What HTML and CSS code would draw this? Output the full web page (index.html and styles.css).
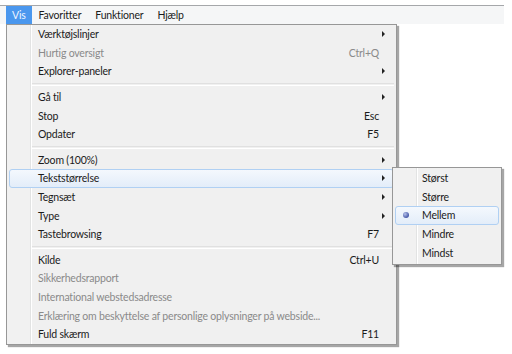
FILE: index.html
```html
<!DOCTYPE html>
<html lang="da">
<head>
    <meta charset="UTF-8">
    <title>Vis</title>
    <link rel="stylesheet" href="styles.css">
</head>
<body>
    <div class="menubar">
        <span class="top-item active">Vis</span>
        <span class="top-item">Favoritter</span>
        <span class="top-item">Funktioner</span>
        <span class="top-item">Hjælp</span>
    </div>

    <div class="menu main-menu">
        <div class="item"><span class="label">Værktøjslinjer</span><span class="arrow"></span></div>
        <div class="item disabled"><span class="label">Hurtig oversigt</span><span class="key">Ctrl+Q</span></div>
        <div class="item"><span class="label">Explorer-paneler</span><span class="arrow"></span></div>
        <div class="sep"></div>
        <div class="item"><span class="label">Gå til</span><span class="arrow"></span></div>
        <div class="item"><span class="label">Stop</span><span class="key">Esc</span></div>
        <div class="item"><span class="label">Opdater</span><span class="key">F5</span></div>
        <div class="sep"></div>
        <div class="item"><span class="label">Zoom (100%)</span><span class="arrow"></span></div>
        <div class="item hover"><span class="label">Tekststørrelse</span><span class="arrow"></span></div>
        <div class="item"><span class="label">Tegnsæt</span><span class="arrow"></span></div>
        <div class="item"><span class="label">Type</span><span class="arrow"></span></div>
        <div class="item"><span class="label">Tastebrowsing</span><span class="key">F7</span></div>
        <div class="sep"></div>
        <div class="item"><span class="label">Kilde</span><span class="key">Ctrl+U</span></div>
        <div class="item disabled"><span class="label">Sikkerhedsrapport</span></div>
        <div class="item disabled"><span class="label">International webstedsadresse</span></div>
        <div class="item disabled"><span class="label">Erklæring om beskyttelse af personlige oplysninger på webside...</span></div>
        <div class="item"><span class="label">Fuld skærm</span><span class="key">F11</span></div>
    </div>

    <div class="menu sub-menu">
        <div class="item"><span class="label">Størst</span></div>
        <div class="item"><span class="label">Større</span></div>
        <div class="item hover"><span class="radio"></span><span class="label">Mellem</span></div>
        <div class="item"><span class="label">Mindre</span></div>
        <div class="item"><span class="label">Mindst</span></div>
    </div>
</body>
</html>
```

FILE: styles.css
```css
body {
    margin: 0;
    background: #fff;
    font-family: 'Lato', 'Noto Sans', sans-serif;
    font-size: 10.5px;
    letter-spacing: -0.2px;
    color: #1b1b1b;
    width: 512px;
    height: 354px;
    position: relative;
    overflow: hidden;
}

.menubar {
    margin-top: 5px;
    width: 498px;
    height: 18px;
    padding-left: 6px;
    border-top: 1px solid #a5a7aa;
    background: #f5f6f7;
    display: flex;
    align-items: stretch;
}
.top-item {
    display: flex;
    align-items: center;
    padding: 0 7px;
}
.top-item.active {
    padding: 0 6px;
    background: #4a97ee;
    color: #eef5ff;
}

.menu {
    position: absolute;
    background: linear-gradient(to right, #f1f1f1 0 23px, #e2e3e3 23px 24px, #fff 24px 25px, #f0f0f0 25px);
    border: 1px solid #979797;
    box-shadow: 2px 2px 1px rgba(0, 0, 0, 0.35);
}
.main-menu {
    left: 6px;
    top: 24px;
    width: 389px;
    padding: 0;
}
.sub-menu {
    left: 392px;
    top: 167px;
    width: 108px;
    padding: 1px 0 2px;
}

.item {
    height: 18.6px;
    display: flex;
    align-items: center;
    padding-left: 28px;
    margin: 0 2px;
    position: relative;
    border: 1px solid transparent;
    box-sizing: border-box;
}
.sub-menu .item {
    padding-left: 26px;
}
.item.hover {
    border-color: #b0d0f3;
    border-radius: 3px;
    background: linear-gradient(#f4f8fd, #e3edf9);
}
.item.disabled {
    color: #8a8a8a;
}
.label {
    white-space: nowrap;
}
.key {
    margin-left: auto;
    margin-right: 14px;
}
.arrow {
    margin-left: auto;
    margin-right: 8px;
    width: 0;
    height: 0;
    border-top: 3px solid transparent;
    border-bottom: 3px solid transparent;
    border-left: 3px solid #222;
}
.sep {
    height: 1px;
    margin: 2px 2px 2px 25px;
    border-top: 1px solid #e0e0e0;
    border-bottom: 1px solid #fff;
}
.radio {
    position: absolute;
    left: 7px;
    top: 5px;
    width: 6px;
    height: 6px;
    border-radius: 50%;
    background: radial-gradient(circle at 35% 35%, #b6c2ea, #4759a8 70%);
}
```
